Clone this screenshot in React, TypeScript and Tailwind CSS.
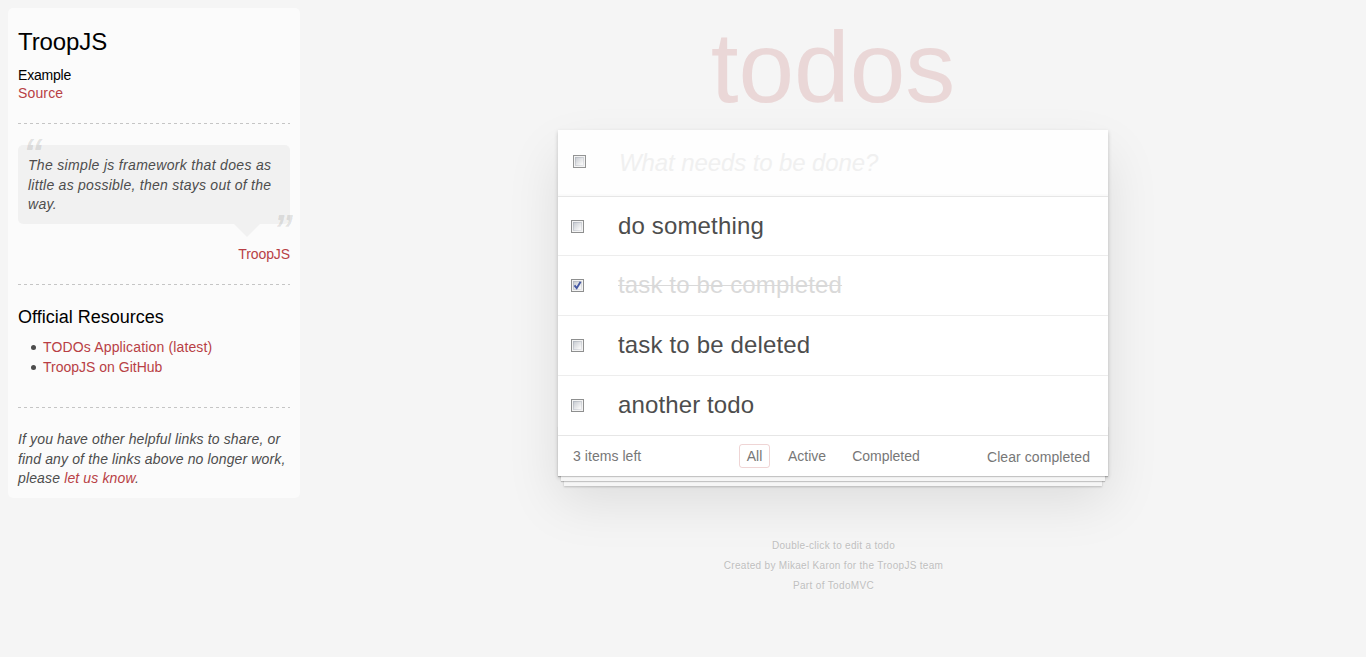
import React from 'react';

type Todo = { title: string; done: boolean; row: string; text: string };

const todos: Todo[] = [
  { title: 'do something', done: false, row: 'h-[59px] pb-px', text: 'tracking-[0.15px]' },
  { title: 'task to be completed', done: true, row: 'h-[60px] pb-px', text: 'tracking-[0.13px]' },
  { title: 'task to be deleted', done: false, row: 'h-[60px] pb-px', text: 'tracking-[0.16px]' },
  { title: 'another todo', done: false, row: 'h-[59px]', text: 'tracking-[0.12px]' },
];

function Checkbox({ checked = false, faded = false }: { checked?: boolean; faded?: boolean }) {
  return (
    <svg
      width="13"
      height="13"
      viewBox="0 0 13 13"
      role="checkbox"
      aria-checked={checked}
      className={faded ? 'block shrink-0 opacity-95' : 'block shrink-0'}
    >
      <defs>
        <linearGradient id="well" x1="0" y1="0" x2="1" y2="1">
          <stop offset="0" stopColor="#c6cad0" />
          <stop offset="0.8" stopColor="#f6f6f6" />
        </linearGradient>
        <linearGradient id="rim" x1="0" y1="0" x2="1" y2="1">
          <stop offset="0" stopColor="#b3b8c0" />
          <stop offset="1" stopColor="#e6e7ea" />
        </linearGradient>
      </defs>
      <rect x="0.5" y="0.5" width="12" height="12" fill="#f4f4f4" stroke="#8e8f8f" />
      <rect x="2.5" y="2.5" width="8" height="8" fill="url(#well)" stroke="url(#rim)" />
      {checked && <path d="M3.5 6.4 5.7 9.2 9.6 2.8" fill="none" stroke="#4558a3" strokeWidth="1.9" />}
    </svg>
  );
}

function Divider({ className }: { className: string }) {
  return (
    <svg className={`block h-px w-[272px] ${className}`} width="272" height="1" aria-hidden="true">
      <path d="M0 .5H272" stroke="#c5c5c5" strokeDasharray="3 3" />
    </svg>
  );
}

function Learn() {
  return (
    <aside className="mt-2 ml-2 h-[490px] w-[292px] shrink-0 rounded-[5px] bg-white/60 p-[10px] text-[14px] leading-[19.6px] text-[#4d4d4d]">
      <h3 className="mt-[10px] text-[24px] leading-[28px] tracking-[-0.1px] text-black">TroopJS</h3>
      <div className="mt-[10px] leading-[18px]">
        <h5 className="tracking-[-0.2px] text-black">Example</h5>
        <a className="block tracking-[0.15px] text-[#b83f45]">Source</a>
      </div>
      <Divider className="mt-[21px]" />
      <blockquote className="relative mt-[21px] h-[79px] rounded-[5px] bg-black/4 p-[10px] italic">
        <span className="absolute top-[-15px] left-[5px] text-[40px] leading-[46px] font-bold text-black/10">“</span>
        <p className="pt-[1.1px] tracking-[0.32px] whitespace-nowrap">
          The simple js framework that does as
          <br />
          <span className="tracking-[0.26px]">little as possible, then stays out of the</span>
          <br />
          way.
        </p>
        <span className="absolute right-[-3px] bottom-[-28px] text-[40px] leading-[46px] font-bold text-black/10">”</span>
        <svg className="absolute top-full right-[30px]" width="26" height="13" aria-hidden="true">
          <path d="M0 0H26L13 13Z" fill="#000" fillOpacity="0.04" />
        </svg>
      </blockquote>
      <div className="mt-5 text-right leading-5 tracking-[-0.1px] text-[#b83f45]">TroopJS</div>
      <Divider className="mt-5" />
      <h4 className="mt-[22px] text-[18px] leading-5 text-black">Official Resources</h4>
      <ul className="mt-[10px] leading-5">
        <li className="flex items-center gap-[7px] pl-[12.5px]">
          <span className="mt-px size-[5.5px] rounded-full bg-[#4d4d4d]" />
          <a className="tracking-[0.15px] text-[#b83f45]">TODOs Application (latest)</a>
        </li>
        <li className="flex items-center gap-[7px] pl-[12.5px]">
          <span className="mt-px size-[5.5px] rounded-full bg-[#4d4d4d]" />
          <a className="text-[#b83f45]">TroopJS on GitHub</a>
        </li>
      </ul>
      <Divider className="mt-[30px]" />
      <p className="mt-[22.1px] tracking-[0.14px] whitespace-nowrap italic">
        If you have other helpful links to share, or
        <br />
        find any of the links above no longer work,
        <br />
        please <a className="text-[#b83f45]">let us know</a>.
      </p>
    </aside>
  );
}

function TodoCard() {
  return (
    <section className="w-[550px] bg-white shadow-[0_2px_4px_0_rgba(0,0,0,0.2),0_25px_50px_0_rgba(0,0,0,0.1)]">
      <header className="flex h-[66px] bg-[#fefefe] pl-[15px] shadow-[inset_0_-2px_1px_rgba(0,0,0,0.015)]">
        <div className="pt-[25px]"><Checkbox faded /></div>
        <div className="pt-[18px] pl-[33px] text-[24px] leading-[30px] tracking-[-0.1px] text-[#f0f0f0] italic">What needs to be done?</div>
      </header>
      <ul className="border-t border-[#e6e6e6]">
        {todos.map((t, i) => (
          <li
            key={t.title}
            className={`flex pl-[13px] ${i < todos.length - 1 ? 'border-b border-[#ededed]' : ''} ${t.row}`}
          >
            <div className="pt-[23px]"><Checkbox checked={t.done} /></div>
            <label className={`pt-[14px] pl-[34px] text-[24px] leading-[30px] ${t.text} ${t.done ? 'text-[#d9d9d9] line-through decoration-1' : 'text-[#4d4d4d]'}`}>
              {t.title}
            </label>
          </li>
        ))}
      </ul>
      <footer className="grid">
        <div className="col-start-1 row-start-1 -mt-[9px] h-[50px] shadow-[0_1px_1px_rgba(0,0,0,0.2),0_8px_0_-3px_#f6f6f6,0_9px_1px_-3px_rgba(0,0,0,0.2),0_16px_0_-6px_#f6f6f6,0_17px_2px_-6px_rgba(0,0,0,0.2)]" />
        <div className="col-start-1 row-start-1 flex h-[41px] border-t border-[#e6e6e6] px-[15px] text-[14px] leading-5 text-[#777777]">
          <span className="w-[166px] pt-[10px] tracking-[0.05px]">3 items left</span>
          <nav className="flex items-start gap-[10px] pt-2">
            <a className="w-[31px] rounded-[3px] border border-[#af2f2f]/20 py-px text-center">All</a>
            <a className="border border-transparent px-[7px] py-px">Active</a>
            <a className="border border-transparent px-[7px] py-px">Completed</a>
          </nav>
          <button className="mr-[3px] ml-auto self-start pt-[11px] tracking-[0.07px]">Clear completed</button>
        </div>
      </footer>
    </section>
  );
}

export default function App() {
  return (
    <div className="flex h-[657px] items-start overflow-hidden bg-[#f5f5f5] font-['Liberation_Sans',Arial,sans-serif]">
      <Learn />
      <main className="flex flex-1 flex-col items-center">
        <h1 className="h-[130px] pt-[10px] text-[100px] leading-[115px] text-[#af2f2f]/15">todos</h1>
        <TodoCard />
        <footer className="mt-[60px] pl-px text-center text-[10px] leading-5 text-[#bfbfbf] [text-shadow:0_1px_0_rgba(255,255,255,0.5)]">
          <p className="tracking-[0.3px]">Double-click to edit a todo</p>
          <p className="tracking-[0.3px]">Created by Mikael Karon for the TroopJS team</p>
          <p className="tracking-[0.35px]">Part of TodoMVC</p>
        </footer>
      </main>
    </div>
  );
}
